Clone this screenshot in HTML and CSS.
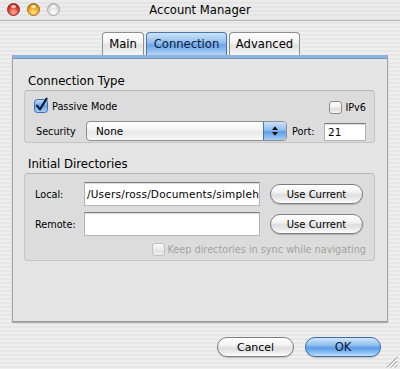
FILE: index.html
```html
<!DOCTYPE html>
<html lang="en">
<head>
    <meta charset="UTF-8">
    <title>Account Manager</title>
    <link rel="stylesheet" href="styles.css">
</head>
<body>
    <div class="window">
        <div class="titlebar">
            <div class="lights">
                <span class="light red"></span>
                <span class="light yellow"></span>
                <span class="light grey"></span>
            </div>
            <div class="title">Account Manager</div>
            <div></div>
        </div>

        <div class="tabs">
            <div class="tab tab-main">Main</div>
            <div class="tab tab-conn active">Connection</div>
            <div class="tab tab-adv">Advanced</div>
        </div>

        <div class="panel">
            <div class="group-title">Connection Type</div>
            <div class="group group-conn">
                <div class="row row-checks">
                    <label class="check">
                        <svg class="box" width="16" height="16" viewBox="0 0 16 16">
                            <defs>
                                <linearGradient id="blueBox" x1="0" y1="0" x2="0" y2="1">
                                    <stop offset="0" stop-color="#c4def8"/>
                                    <stop offset="0.5" stop-color="#6fa7e6"/>
                                    <stop offset="1" stop-color="#a9d0f6"/>
                                </linearGradient>
                            </defs>
                            <rect x="1.5" y="2.5" width="13" height="13" rx="3" fill="url(#blueBox)" stroke="#3d6ea8"/>
                            <path d="M4 8.6 L7 12.4 L13.6 1.6" fill="none" stroke="#0d1b3d" stroke-width="2.2" stroke-linecap="round" stroke-linejoin="round"/>
                        </svg>
                        Passive Mode
                    </label>
                    <label class="check">
                        <span class="box-empty"></span>
                        IPv6
                    </label>
                </div>
                <div class="row">
                    <span class="label label-security">Security</span>
                    <div class="popup">
                        <span class="popup-value">None</span>
                        <span class="popup-arrows">
                            <svg width="8" height="12" viewBox="0 0 8 12">
                                <path d="M1 5 L4 1.2 L7 5 Z M1 7 L4 10.8 L7 7 Z" fill="#111"/>
                            </svg>
                        </span>
                    </div>
                    <span class="label label-port">Port:</span>
                    <div class="field field-port">21</div>
                </div>
            </div>

            <div class="group-title group-title-dirs">Initial Directories</div>
            <div class="group group-dirs">
                <div class="dir-grid">
                    <span class="label">Local:</span>
                    <div class="field field-path">/Users/ross/Documents/simplehelp</div>
                    <button class="aqua-button">Use Current</button>

                    <span class="label">Remote:</span>
                    <div class="field field-path"></div>
                    <button class="aqua-button">Use Current</button>
                </div>
                <div class="row row-sync">
                    <label class="check check-disabled">
                        <span class="box-empty"></span>
                        Keep directories in sync while navigating
                    </label>
                </div>
            </div>
        </div>

        <div class="actions">
            <button class="aqua-button big">Cancel</button>
            <button class="aqua-button big default">OK</button>
        </div>

        <svg class="grip" width="12" height="12" viewBox="0 0 12 12">
            <path d="M11.5 1 L1 11.5 M11.5 5 L5 11.5 M11.5 9 L9 11.5" stroke="#8a8a8a" stroke-width="1"/>
            <path d="M12 2 L2 12 M12 6 L6 12 M12 10 L10 12" stroke="#ffffff" stroke-width="1"/>
        </svg>
    </div>
</body>
</html>
```

FILE: styles.css
```css
* {
    box-sizing: border-box;
}

body {
    margin: 0;
    font-family: 'DejaVu Sans', 'Lucida Grande', sans-serif;
    color: #000;
}

.window {
    position: relative;
    width: 400px;
    height: 369px;
    overflow: hidden;
    background: repeating-linear-gradient(to bottom, #efefef 0, #efefef 2px, #e7e7e7 2px, #e7e7e7 4px);
}

/* title bar */

.titlebar {
    display: grid;
    grid-template-columns: 1fr auto 1fr;
    align-items: center;
    height: 21px;
    padding: 0 7px;
    background: repeating-linear-gradient(to bottom, #ececec 0, #ececec 2px, #e4e4e4 2px, #e4e4e4 4px);
    border-bottom: 1px solid #b4b4b4;
}

.lights {
    display: flex;
    gap: 7px;
    margin-top: -2px;
}

.light {
    position: relative;
    width: 13px;
    height: 13px;
    border-radius: 50%;
}

.light::after {
    content: "";
    position: absolute;
    left: 3px;
    top: 1px;
    width: 5px;
    height: 3px;
    border-radius: 50%;
    background: rgba(255,255,255,0.75);
}

.red {
    background: radial-gradient(circle at 50% 75%, #ffb0a0 0, #e2382c 55%, #9c1610 100%);
    border: 1px solid #8a2a24;
}

.yellow {
    background: radial-gradient(circle at 50% 75%, #ffe48a 0, #f0a018 55%, #a86a08 100%);
    border: 1px solid #9a6a1c;
}

.grey {
    background: radial-gradient(circle at 50% 75%, #ffffff 0, #dcdcdc 55%, #b8b8b8 100%);
    border: 1px solid #a6a6a6;
}

.title {
    font-size: 11.6px;
    margin-top: -1px;
}

/* tabs */

.tabs {
    display: flex;
    justify-content: center;
    gap: 2px;
    margin-top: 11px;
    height: 23px;
    padding-left: 2px;
}

.tab {
    height: 23px;
    padding-top: 4px;
    text-align: center;
    font-size: 11.6px;
    border: 1px solid #8e8e8e;
    border-bottom: none;
    border-radius: 4px 4px 0 0;
    background: linear-gradient(to bottom, #ffffff 0%, #f2f2f2 45%, #e2e2e2 55%, #f6f6f6 100%);
}

.tab-main {
    width: 42px;
}

.tab-conn {
    width: 81px;
}

.tab-adv {
    width: 71px;
}

.tab.active {
    color: #0a1a40;
    border-color: #4a76b2;
    background: linear-gradient(to bottom, #cde3fa 0%, #8fbdef 45%, #6aa4e6 55%, #b4d6f8 100%);
}

/* panel */

.panel {
    height: 267px;
    margin: 0 12px;
    padding: 15px 12px 0 11px;
    background: #e4e4e4;
    border-top: 3px solid #8db3e0;
    border-left: 1px solid #a6a6a6;
    border-right: 1px solid #a6a6a6;
    border-bottom: 1px solid #9a9a9a;
    box-shadow: 0 1px 1px rgba(0,0,0,0.25), inset 0 1px 0 #6f95c6;
}

.group-title {
    height: 16px;
    line-height: 16px;
    padding-left: 4px;
    font-size: 11.7px;
    margin-bottom: 1px;
}

.group-title-dirs {
    margin-top: 13px;
}

.group {
    background: #dcdcdc;
    border: 1px solid #c4c4c4;
    border-top-color: #b6b6b6;
    border-radius: 4px;
}

.group-conn {
    display: flex;
    flex-direction: column;
    gap: 7px;
    padding: 7px 8px 1px 10px;
}

.row {
    display: flex;
    align-items: center;
}

.row-checks {
    justify-content: space-between;
    height: 16px;
}

.row-checks .check:last-child {
    margin-top: 3px;
}

.check {
    display: flex;
    align-items: center;
    gap: 3px;
    font-size: 9.7px;
}

.check .box {
    margin: -3px 0 0 -2px;
}

.box-empty {
    width: 13px;
    height: 13px;
    border: 1px solid #8c8c8c;
    border-radius: 3px;
    background: linear-gradient(to bottom, #ffffff 0%, #eeeeee 50%, #dadada 55%, #f4f4f4 100%);
}

.check-disabled {
    color: #a3a3a3;
}

.check-disabled .box-empty {
    border-color: #c0c0c0;
    background: linear-gradient(to bottom, #f6f6f6 0%, #ececec 50%, #e0e0e0 55%, #efefef 100%);
}

.label {
    font-size: 9.7px;
}

.label-security {
    width: 51px;
    padding-left: 1px;
}

.label-port {
    width: 32px;
    margin-left: 5px;
}

/* popup button */

.popup {
    display: flex;
    width: 201px;
    height: 20px;
    border: 1px solid #8e8e8e;
    border-radius: 4px;
    overflow: hidden;
    background: linear-gradient(to bottom, #ffffff 0%, #f4f4f4 45%, #e6e6e6 55%, #fafafa 100%);
}

.popup-value {
    flex: 1;
    padding-left: 9px;
    font-size: 10.4px;
    line-height: 18px;
}

.popup-arrows {
    display: flex;
    align-items: center;
    justify-content: center;
    width: 23px;
    border-left: 1px solid #4a76b2;
    background: linear-gradient(to bottom, #cde3fa 0%, #8fbdef 45%, #5f9de4 55%, #a9d0f6 100%);
}

/* text fields */

.field {
    background: #fff;
    border: 1px solid #b4b4b4;
    border-top-color: #7c7c7c;
    box-shadow: inset 0 1px 1px rgba(0,0,0,0.15);
    font-size: 10.5px;
    white-space: nowrap;
    overflow: hidden;
}

.field-port {
    width: 42px;
    height: 18px;
    line-height: 16px;
    padding-left: 3px;
    margin-top: 1px;
}

.group-dirs {
    padding: 8px 11px 4px 10px;
}

.dir-grid {
    display: grid;
    grid-template-columns: 39px 176px 93px;
    grid-auto-rows: 24px;
    column-gap: 10px;
    row-gap: 6px;
    align-items: center;
}

.field-path {
    height: 24px;
    line-height: 22px;
    padding-left: 2px;
    letter-spacing: 0.2px;
}

.row-sync {
    justify-content: flex-end;
    height: 14px;
    margin-top: 6px;
    margin-right: -3px;
}

/* aqua buttons */

.aqua-button {
    height: 20px;
    padding: 0;
    font-family: inherit;
    font-size: 10px;
    color: #000;
    border: 1px solid #7e7e7e;
    border-radius: 10px;
    background: linear-gradient(to bottom, #ffffff 0%, #f3f3f3 40%, #dedede 55%, #ececec 80%, #ffffff 100%);
    box-shadow: 0 1px 1px rgba(0,0,0,0.2);
}

.actions {
    display: flex;
    justify-content: flex-end;
    gap: 11px;
    margin-top: 15px;
    padding-right: 19px;
}

.aqua-button.big {
    width: 77px;
    font-size: 10.9px;
}

.aqua-button.default {
    width: 76px;
    font-size: 11.6px;
    color: #0a1430;
    border-color: #3e6aa8;
    background: linear-gradient(to bottom, #d2e7fb 0%, #8ebff0 40%, #5c9ce6 55%, #86bff4 80%, #c6e2fb 100%);
}

.grip {
    position: absolute;
    right: 2px;
    bottom: 1px;
}
```
